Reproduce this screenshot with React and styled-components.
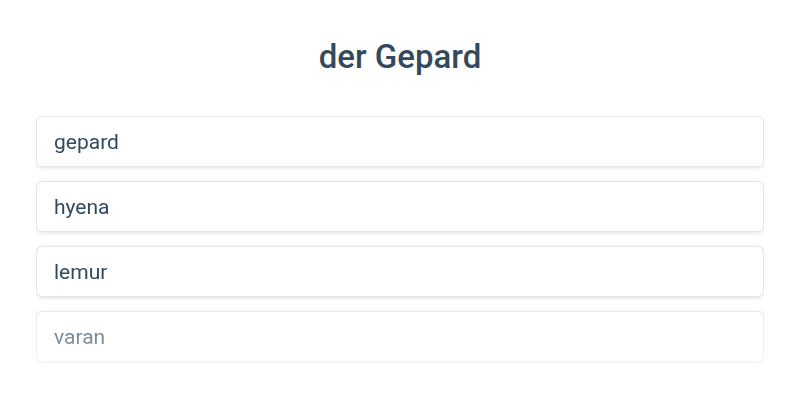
import React from 'react';
import styled, { createGlobalStyle } from 'styled-components';

const words = ['gepard', 'hyena', 'lemur', 'varan'];

const GlobalStyle = createGlobalStyle`
  body {
    margin: 0;
    background: #ffffff;
    font-family: Roboto, "Liberation Sans", sans-serif;
  }
`;

const Page = styled.div`
  padding: 36px 36px 0;
`;

const Title = styled.h1`
  margin: 0 0 38px;
  text-align: center;
  font-size: 33px;
  line-height: 42px;
  font-weight: 500;
  color: #34495e;
`;

const List = styled.div`
  display: flex;
  flex-direction: column;
  gap: 14px;
  padding-bottom: 6px;
  -webkit-mask-image: linear-gradient(to bottom, #000 0, #000 180px, rgba(0, 0, 0, 0.4) 250px);
  mask-image: linear-gradient(to bottom, #000 0, #000 180px, rgba(0, 0, 0, 0.4) 250px);
`;

const Option = styled.div`
  height: 49px;
  display: flex;
  align-items: center;
  padding: 0 17px;
  border: 1px solid #e4e4e4;
  border-radius: 6px;
  background: #fff;
  box-shadow: 0 1px 4px rgba(0, 0, 0, 0.12);
  font-size: 21px;
  color: #34495e;
`;

export default function App() {
  return (
    <>
      <GlobalStyle />
      <Page>
        <Title>der Gepard</Title>
        <List>
          {words.map((w) => (
            <Option key={w}>{w}</Option>
          ))}
        </List>
      </Page>
    </>
  );
}
